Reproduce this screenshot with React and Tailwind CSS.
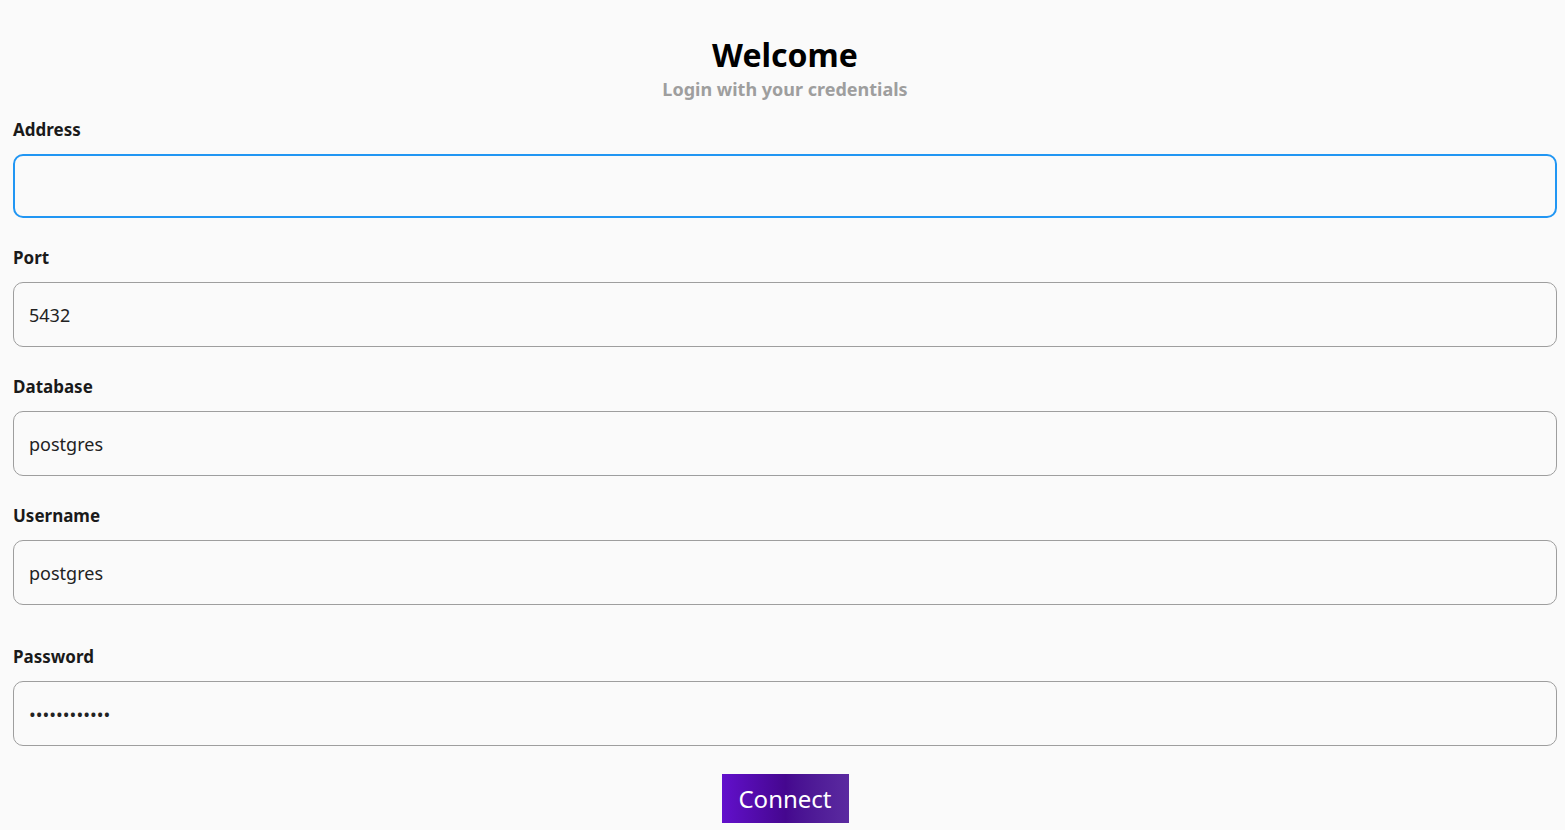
import { useState } from "react";

const Field = ({ label, value, type = "text", focused, className = "" }) => {
  const [val, setVal] = useState(value);
  return (
    <div className={className}>
      <label className="block text-[17px] leading-[24px] font-bold text-[#1a1a1a] mb-[12px]">{label}</label>
      <input
        type={type}
        value={val}
        onChange={(e) => setVal(e.target.value)}
        className={
          "w-full rounded-[10px] bg-[#fafafa] px-[15px] text-[18px] text-[#222] outline-none " +
          (focused ? "h-[64px] border-2 border-[#2196f3]" : "h-[65px] border border-[#9e9e9e]")
        }
      />
    </div>
  );
};

const App = () => {
  return (
    <div className="min-h-screen bg-[#fafafa] pl-[13px] pr-[8px] font-['Noto_Sans',sans-serif]">
      {/* header */}
      <div className="pt-[35px] text-center">
        <h1 className="text-[32px] leading-[40px] font-bold text-black">Welcome</h1>
        <p className="mt-[2px] text-[18px] leading-[24px] font-bold text-[#9e9e9e]">Login with your credentials</p>
      </div>

      <Field label="Address" value="" focused className="mt-[17px]" />
      <Field label="Port" value="5432" className="mt-[28px]" />
      <Field label="Database" value="postgres" className="mt-[28px]" />
      <Field label="Username" value="postgres" className="mt-[28px]" />
      <Field label="Password" value="postgres1234" type="password" className="mt-[40px]" />

      <div className="flex justify-center mt-[28px]">
        <button className="w-[127px] h-[49px] text-white text-[24px] bg-gradient-to-r from-[#6210cc] via-[#45078f] to-[#5b2aa0]">
          Connect
        </button>
      </div>
    </div>
  );
};

export default App;
